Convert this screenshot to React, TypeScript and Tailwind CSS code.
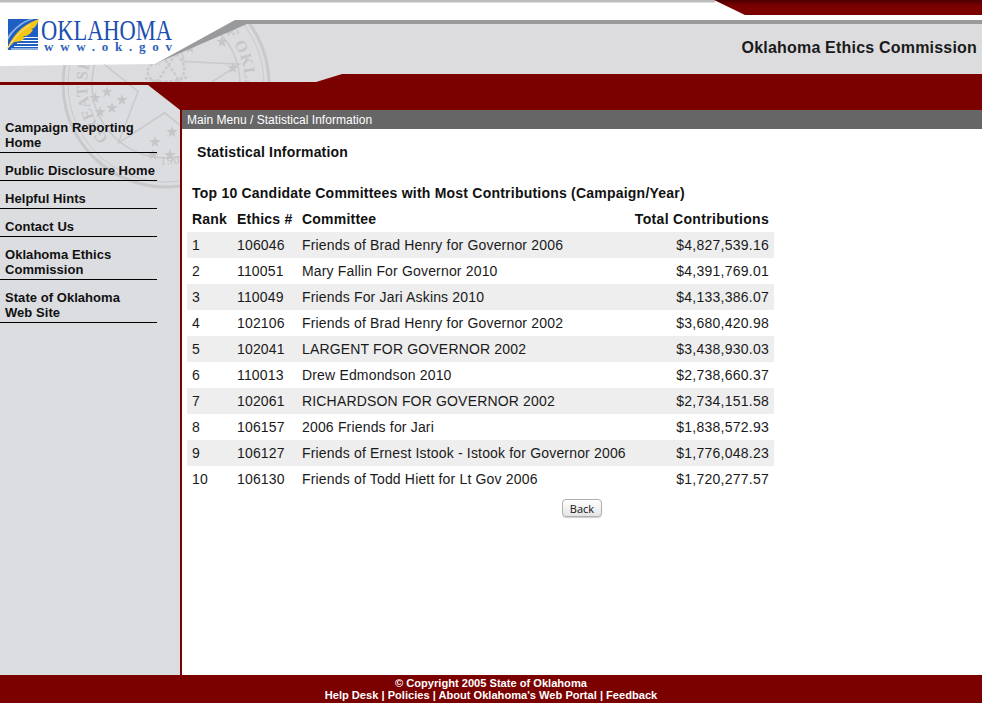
import React from 'react';

const RED = '#7b0000';

const rows = [
  { rank: 1, id: '106046', name: 'Friends of Brad Henry for Governor 2006', total: '$4,827,539.16' },
  { rank: 2, id: '110051', name: 'Mary Fallin For Governor 2010', total: '$4,391,769.01' },
  { rank: 3, id: '110049', name: 'Friends For Jari Askins 2010', total: '$4,133,386.07' },
  { rank: 4, id: '102106', name: 'Friends of Brad Henry for Governor 2002', total: '$3,680,420.98' },
  { rank: 5, id: '102041', name: 'LARGENT FOR GOVERNOR 2002', total: '$3,438,930.03' },
  { rank: 6, id: '110013', name: 'Drew Edmondson 2010', total: '$2,738,660.37' },
  { rank: 7, id: '102061', name: 'RICHARDSON FOR GOVERNOR 2002', total: '$2,734,151.58' },
  { rank: 8, id: '106157', name: '2006 Friends for Jari', total: '$1,838,572.93' },
  { rank: 9, id: '106127', name: 'Friends of Ernest Istook - Istook for Governor 2006', total: '$1,776,048.23' },
  { rank: 10, id: '106130', name: 'Friends of Todd Hiett for Lt Gov 2006', total: '$1,720,277.57' },
];

const menu = [
  ['Campaign Reporting', 'Home'],
  ['Public Disclosure Home'],
  ['Helpful Hints'],
  ['Contact Us'],
  ['Oklahoma Ethics', 'Commission'],
  ['State of Oklahoma', 'Web Site'],
];

// five point star as polygon points
const star = (cx: number, cy: number, r: number, rot = 0, inner = 0.4) => {
  const pts: string[] = [];
  for (let i = 0; i < 10; i++) {
    const rad = i % 2 === 0 ? r : r * inner;
    const a = (Math.PI / 5) * i - Math.PI / 2 + rot;
    pts.push(`${(cx + rad * Math.cos(a)).toFixed(1)},${(cy + rad * Math.sin(a)).toFixed(1)}`);
  }
  return pts.join(' ');
};

const smallStars = [
  [107, 92], [95, 98], [122, 100], [100, 112], [112, 108],
  [155, 142], [172, 132], [170, 155], [153, 155],
  [222, 42], [233, 68], [190, 48],
];

const Seal = () => (
  <g fill="none" stroke="#c9c9cc">
    <circle cx="166" cy="84" r="103" strokeWidth="3" />
    <circle cx="166" cy="84" r="98" strokeWidth="1" />
    <circle cx="166" cy="84" r="74" strokeWidth="1.5" />
    <path id="seal-ring" d="M 166 163 A 79 79 0 1 1 166.1 163" stroke="none" />
    <path id="seal-year" d="M 120 150 A 80 80 0 0 0 212 150" stroke="none" />
    <text fill="#c6c6c9" stroke="none" fontFamily="'Liberation Serif', serif" fontSize="16" fontWeight="700">
      <textPath href="#seal-ring" startOffset="64" textLength="369" lengthAdjust="spacing">
        GREAT SEAL OF THE STATE OF OKLAHOMA
      </textPath>
    </text>
    <text fill="#c2c2c5" stroke="none" fontFamily="'Liberation Serif', serif" fontSize="12" letterSpacing="1">
      <textPath href="#seal-year" startOffset="43">1907</textPath>
    </text>
    <polygon points={star(166, 84, 76, 0.05, 0.38)} strokeWidth="1.5" />
    {smallStars.map(([x, y]) => (
      <polygon key={`${x}-${y}`} points={star(x, y, 6)} fill="#c6c6c9" stroke="none" />
    ))}
    <path d="M150 60c8-10 22-12 30-2s4 22-6 26-24-2-26-10 6-12 12-10M160 52l20 30M178 50l-22 34M145 78c10 4 30 6 44-2" strokeWidth="2.5" strokeDasharray="3 2" />
  </g>
);

const Logo = () => (
  <g>
    <rect x="8" y="19" width="30" height="31" fill="#1f5fc4" />
    <g stroke="#fff" strokeWidth="1">
      <path d="M22 37.5h16M20 40.5h18M17 43.5h21M14 46.5h24M11 49h27" />
    </g>
    <path d="M8 36c6-8 13-14 22-17h4C24 22 15 28 8 40z" fill="#8fb4e8" />
    <path d="M6 51c3-8 9-17 16-23 5-4 11-7 17-9-1 4-3 7-5 9l-3 1 2 1c-2 3-4 5-7 6l-3 0 2 2c-3 3-7 4-11 4-3 3-6 6-8 9z" fill="#f5c518" />
    <path d="M6 51c6-10 14-20 24-26" stroke="#fff" strokeWidth="0.6" fill="none" />
    <text x="41" y="39.5" fill="#1c4fb0" fontFamily="'Liberation Serif', serif" fontSize="30" textLength="131" lengthAdjust="spacingAndGlyphs">OKLAHOMA</text>
    <text x="44" y="50.5" fill="#2a62b8" fontFamily="'Liberation Serif', serif" fontSize="13" fontWeight="700" textLength="128">www.ok.gov</text>
  </g>
);

const Header = () => (
  <header className="relative h-[110px] shrink-0">
    <svg className="absolute inset-0" width="982" height="110" viewBox="0 0 982 110">
      <defs>
        <clipPath id="gray-area">
          <polygon points="0,66 155,64 245,24 982,24 982,74 342,74 316,82 0,82" />
          <polygon points="0,85 148,85 180,110 0,110" />
        </clipPath>
        <linearGradient id="top-red" x1="0" y1="0" x2="0" y2="1">
          <stop offset="0" stopColor="#4d0000" />
          <stop offset="0.4" stopColor={RED} />
        </linearGradient>
      </defs>
      <rect width="982" height="110" fill="#fff" />
      <rect width="715" height="2.5" fill="#bdbdbd" />
      <polygon points="714,0 982,0 982,15 745,15" fill="url(#top-red)" />
      <polygon points="0,66 155,64 245,24 982,24 982,74 342,74 316,82 0,82" fill="#dcdcde" />
      <polygon points="0,85 148,85 180,110 0,110" fill="#dcdde0" />
      <g clipPath="url(#gray-area)"><Seal /></g>
      <polygon points="155,64 235,20 982,20 982,24 247,24" fill="#999a9c" />
      <polygon points="342,74 982,74 982,110 180,110 148,85 0,85 0,82 316,82" fill={RED} />
      <Logo />
    </svg>
    <h1 className="absolute right-[5px] top-[39px] text-[16px] leading-[18px] font-bold tracking-[0.2px] text-[#1a1a1a]">
      Oklahoma Ethics Commission
    </h1>
  </header>
);

const Sidebar = () => (
  <aside className="relative w-[182px] shrink-0 border-r-2 border-[#7b0000] bg-[#dcdde0] pt-[10px]">
    <svg className="absolute left-0 top-0" width="180" height="90" viewBox="0 110 180 90">
      <Seal />
    </svg>
    <nav className="relative flex flex-col gap-[10px]">
      {menu.map((lines) => (
        <a key={lines[0]} className="block w-[157px] border-b border-black pb-[2px] pl-[5px] text-[13px] leading-[15px] font-bold tracking-[0.05px] text-[#111]">
          {lines.map((l) => (
            <div key={l} className="whitespace-nowrap">{l}</div>
          ))}
        </a>
      ))}
    </nav>
  </aside>
);

const App = () => (
  <div className="h-[728px] w-[982px] bg-white font-['Liberation_Sans',Arial,sans-serif]">
    <div className="flex h-[703px] flex-col">
      <Header />
      <div className="flex min-h-0 flex-1">
        <Sidebar />
        <main className="flex flex-1 flex-col">
          <div className="h-[19px] bg-[#666666] pl-[5px] pt-px text-[12px] leading-[19px] tracking-[0.03px] text-white">
            Main Menu / Statistical Information
          </div>
          <h2 className="pl-[15px] pt-[15px] text-[14px] leading-[16px] font-bold tracking-[0.17px] text-[#111]">Statistical Information</h2>
          <table className="ml-[5px] mt-[20px] w-[587px] border-collapse text-[14px] tracking-[0.17px] text-[#1a1a1a]">
            <thead className="font-bold tracking-[0.22px] text-[#111]">
              <tr className="h-[26px]">
                <th colSpan={4} className="px-[5px] text-left font-bold">
                  Top 10 Candidate Committees with Most Contributions (Campaign/Year)
                </th>
              </tr>
              <tr className="h-[26px]">
                <th className="w-[45px] pl-[5px] text-left font-bold">Rank</th>
                <th className="w-[65px] pl-[5px] text-left font-bold">Ethics #</th>
                <th className="pl-[5px] text-left font-bold">Committee</th>
                <th className="pr-[5px] text-right font-bold tracking-[0.32px]">Total Contributions</th>
              </tr>
            </thead>
            <tbody>
              {rows.map((r) => (
                <tr key={r.rank} className="h-[26px] odd:bg-[#eeeeee]">
                  <td className="pl-[5px]">{r.rank}</td>
                  <td className="pl-[5px]">{r.id}</td>
                  <td className="pl-[5px]">{r.name}</td>
                  <td className="pr-[5px] text-right tracking-[0.25px]">{r.total}</td>
                </tr>
              ))}
            </tbody>
          </table>
          <div className="mt-[7px] flex justify-center">
            <button className="h-[18px] w-[40px] rounded-[4px] border border-[#b0b0b0] bg-gradient-to-b from-white to-[#e4e4e4] pt-px font-['Open_Sans',sans-serif] text-[11px] leading-[16px] text-[#111] shadow-[0_1px_1px_rgba(0,0,0,0.2)]">
              Back
            </button>
          </div>
        </main>
      </div>
      <footer className="h-[28px] shrink-0 bg-[#7b0000] pt-[2px] text-center text-[11.1px] leading-[12px] font-bold text-white">
        <div>© Copyright 2005 State of Oklahoma</div>
        <div>Help Desk | Policies | About Oklahoma's Web Portal | Feedback</div>
      </footer>
    </div>
  </div>
);

export default App;
